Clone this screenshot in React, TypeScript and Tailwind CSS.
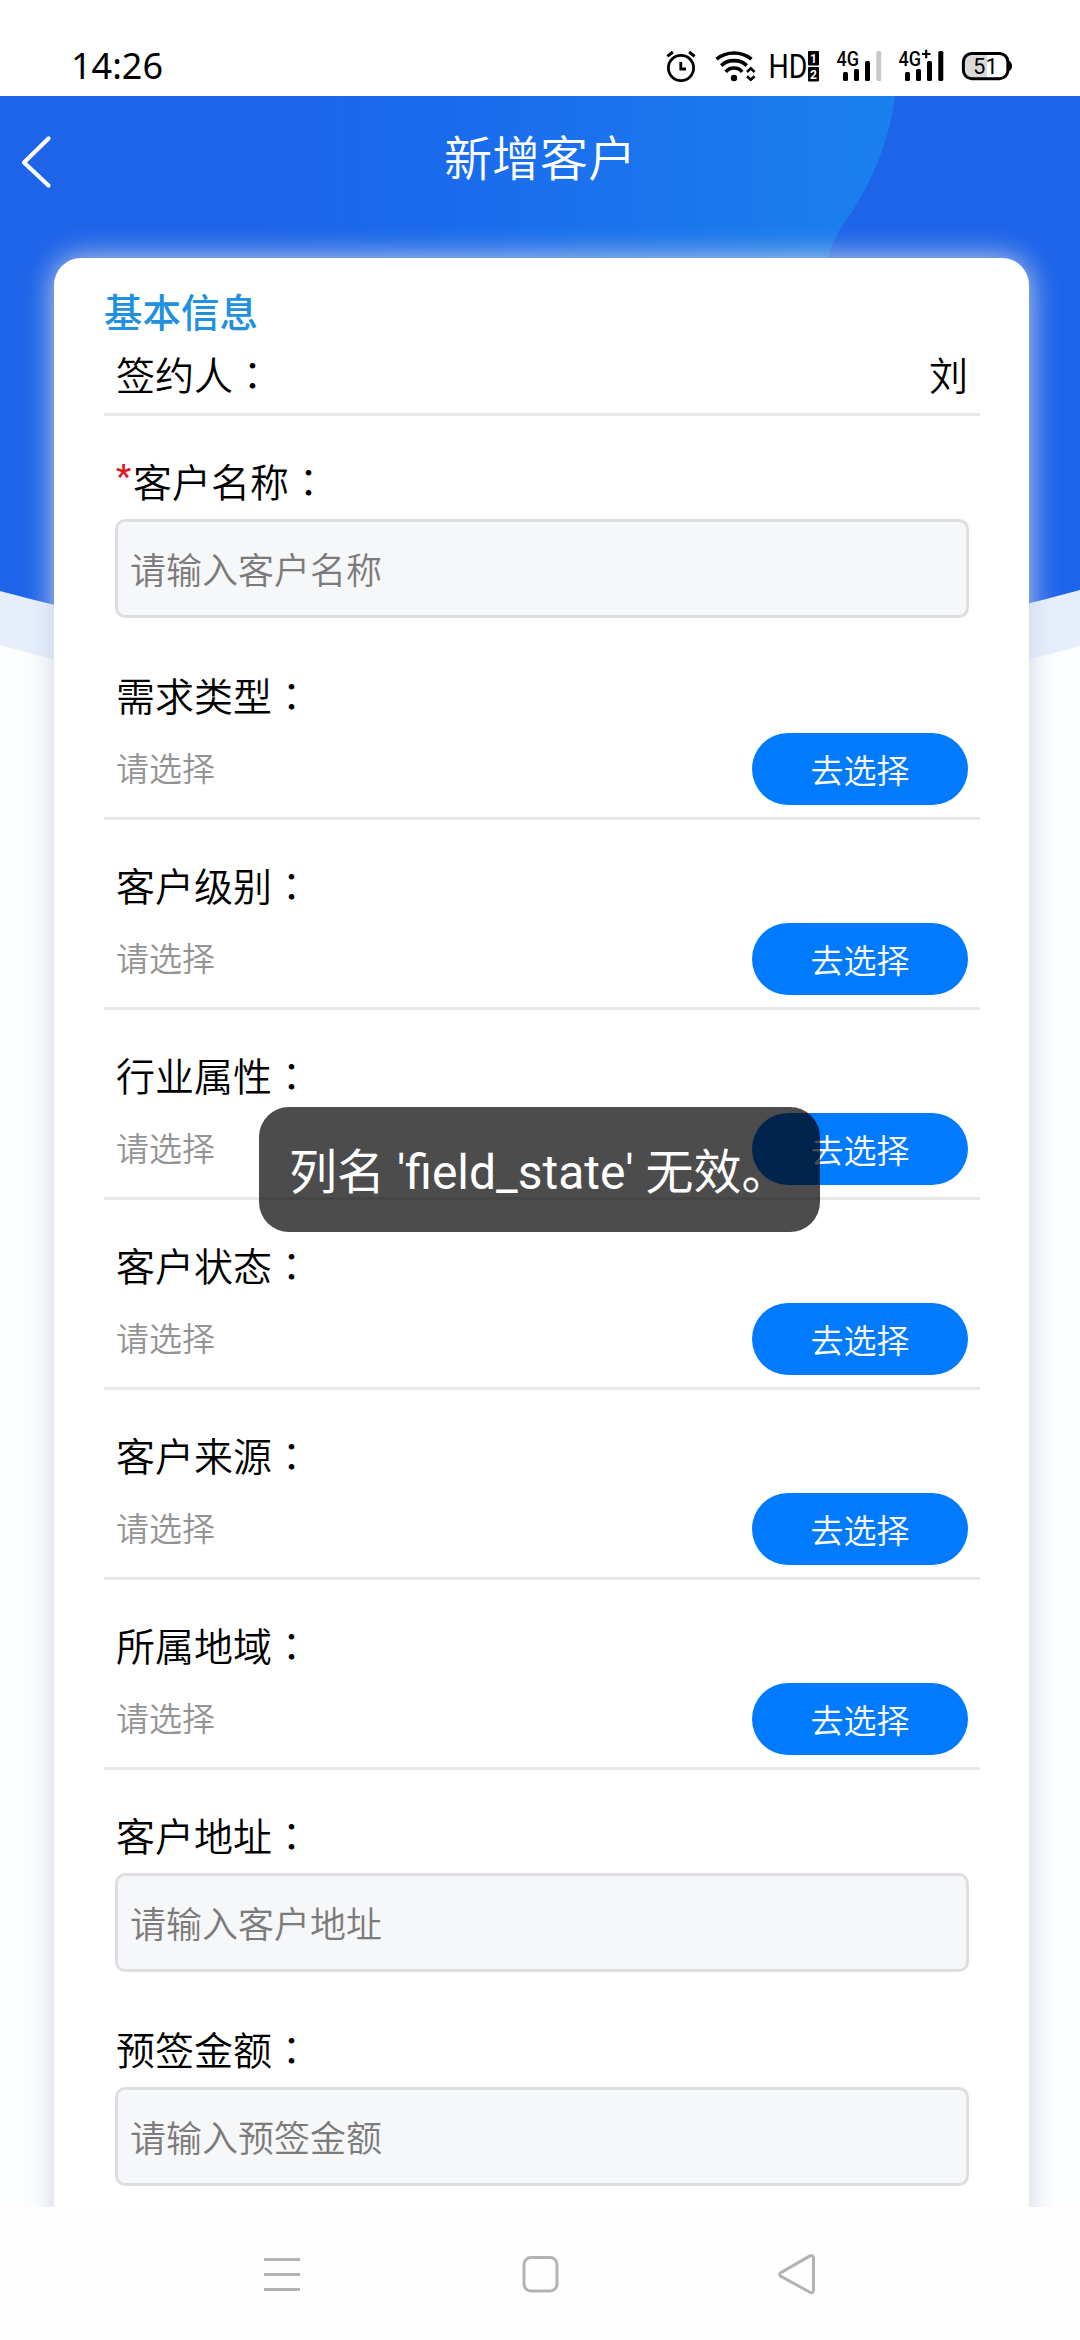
import { ReactNode } from "react";

type Field = {
  label: string;
  type: "input" | "select";
  required?: boolean;
};

const fields: Field[] = [
  { label: "客户名称", type: "input", required: true },
  { label: "需求类型", type: "select" },
  { label: "客户级别", type: "select" },
  { label: "行业属性", type: "select" },
  { label: "客户状态", type: "select" },
  { label: "客户来源", type: "select" },
  { label: "所属地域", type: "select" },
  { label: "客户地址", type: "input" },
  { label: "预签金额", type: "input" },
];

const AlarmIcon = () => (
  <svg width="30" height="36" viewBox="0 0 30 36" fill="none" stroke="#000" strokeWidth="2.8">
    <circle cx="15" cy="20" r="12.6" />
    <path d="M14.8 14v7h5.2" />
    <path d="M1.4 8.4L6.8 4M23.2 4l5.4 4.4" strokeWidth="3" />
  </svg>
);

const WifiIcon = () => (
  <svg width="41" height="36" viewBox="0 0 41 36" fill="none" stroke="#000">
    <path d="M1.5 11.2C11.5 3 26.5 3 36.5 11.2" strokeWidth="3.6" />
    <path d="M6.3 17.6C13 11 25 11 31.7 17.6" strokeWidth="3.6" />
    <path d="M10.8 23.8C15 18.8 23 18.8 27.2 23.8" strokeWidth="3.6" />
    <circle cx="19" cy="30" r="3.2" fill="#000" stroke="none" />
    <path d="M32 24l3.8-3.6 3.8 3.6M32 28.2l3.8 3.6 3.8-3.6" strokeWidth="2.6" />
  </svg>
);

const HdIcon = () => (
  <svg className="overflow-visible" width="52" height="44" viewBox="-2 -4 52 44" fontFamily="Roboto, sans-serif">
    <text x="-1.5" y="30" fontSize="33" textLength="39" lengthAdjust="spacingAndGlyphs">HD</text>
    <rect x="38" y="3" width="11" height="14.5" rx="1" />
    <rect x="38" y="19" width="11" height="14.5" rx="1" />
    <text x="43.5" y="14.6" fontSize="12" fontWeight="700" textAnchor="middle" fill="#fff">1</text>
    <text x="43.5" y="30.6" fontSize="12" fontWeight="700" textAnchor="middle" fill="#fff">2</text>
  </svg>
);

const SignalIcon = ({ plus, weak }: { plus?: boolean; weak?: boolean }) => (
  <svg width="46" height="36" viewBox="0 0 46 36" fontFamily="Roboto, sans-serif">
    <text x="0.5" y="18" fontSize="20" fontWeight="500" textLength="22.5" lengthAdjust="spacingAndGlyphs">4G</text>
    {plus && <path d="M24 6h8.5M28.2 1.8v8.5" stroke="#000" strokeWidth="2.2" />}
    <rect x="7" y="24" width="5" height="9" rx="1.5" />
    <rect x="18" y="21" width="5" height="12" rx="1.5" />
    <rect x="29" y="13" width="5" height="20" rx="1.5" />
    <rect x="40.3" y="3" width="5" height="30" rx="1.5" fill={weak ? "#c9c9c9" : "#000"} />
  </svg>
);

const BatteryIcon = () => (
  <svg width="52" height="36" viewBox="0 0 52 36">
    <path d="M10 5h16v26H10a8 8 0 0 1-8-8V13a8 8 0 0 1 8-8z" fill="#d9d9d9" />
    <rect x="2.4" y="5.4" width="44.5" height="25.4" rx="8.5" fill="none" stroke="#000" strokeWidth="3" />
    <path d="M47.5 12.5c4.8 2 4.8 9 0 11z" />
    <text x="24.4" y="25.8" fontSize="22" textAnchor="middle" fontFamily="Roboto, sans-serif">51</text>
  </svg>
);

const StatusBar = () => (
  <div className="flex h-24 items-start justify-between bg-white pt-11 pr-[67px] pl-[71px]">
    <span className="mt-1 font-['Noto_Sans',sans-serif] text-[36px] leading-9 text-black">14:26</span>
    <div className="flex items-center">
      <AlarmIcon />
      <div className="ml-[19px]"><WifiIcon /></div>
      <div className="ml-3"><HdIcon /></div>
      <div className="ml-4"><SignalIcon weak /></div>
      <div className="ml-4"><SignalIcon plus /></div>
      <div className="ml-[17px]"><BatteryIcon /></div>
    </div>
  </div>
);

const Backdrop = () => (
  <svg className="absolute top-0 left-0" width="1080" height="580" viewBox="0 0 1080 580">
    <defs>
      <linearGradient id="glow" x1="0" y1="0" x2="1" y2="0">
        <stop offset="0" stopColor="#1d64e9" />
        <stop offset="0.3" stopColor="#1a6bec" />
        <stop offset="1" stopColor="#1a80ee" />
      </linearGradient>
    </defs>
    <path d="M0 0H1080V550Q810 625 540 625Q270 625 0 549z" fill="#e6eefc" />
    <path d="M0 0H1080V494Q810 568 540 568Q270 568 0 495z" fill="#1d64e9" />
    <path d="M260 0H895C889 50 866 98 842 130Q832 146 828 162H260z" fill="url(#glow)" />
  </svg>
);

const Label = ({ children, required }: { children: ReactNode; required?: boolean }) => (
  <div className="flex h-[57px] items-center px-3 pb-1 text-[39px] font-[350] text-black">
    {required && <span className="w-[17px] pb-2.5 font-[Roboto] text-[34px] font-medium text-[#dd1a21]">*</span>}
    <span>{children}</span>
    <span className="font-['Noto_Sans_CJK_TC',sans-serif]">：</span>
  </div>
);

const InputField = ({ label, required }: Field) => (
  <div className="pt-[38px]">
    <Label required={required}>{label}</Label>
    <div className="mx-[11px] mt-2 flex h-[99px] items-center rounded-[10px] border-[3px] border-[#dddee1] bg-[#f6f7f9] px-3 pb-0.5 text-[36px] font-[350] text-[#7b7b7b]">
      请输入{label}
    </div>
    <div className="h-3" />
  </div>
);

const SelectField = ({ label }: Field) => (
  <div className="h-[190px] border-b-[3px] border-[#e8e8e8] pt-[38px]">
    <Label>{label}</Label>
    <div className="mt-2 flex items-center justify-between px-3">
      <span className="pb-1 text-[33px] font-[350] text-[#949494]">请选择</span>
      <button className="h-[72px] w-[216px] rounded-full bg-[#007aff] text-[33px] font-[350] text-white">去选择</button>
    </div>
  </div>
);

const NavBar = () => (
  <div className="flex h-[133px] items-center justify-between bg-[#fefefe] px-[262px] pt-0.5">
    <svg width="40" height="42" viewBox="0 0 40 42" stroke="#b3b3b3" strokeWidth="3">
      <path d="M2 5.500h36M2 20.500h36M2 35.500h36" />
    </svg>
    <svg width="40" height="42" viewBox="0 0 40 42" fill="none" stroke="#b3b3b3" strokeWidth="3">
      <rect x="4" y="3.5" width="33" height="33.5" rx="7" />
    </svg>
    <svg width="40" height="42" viewBox="0 0 40 42" fill="none" stroke="#b3b3b3" strokeWidth="3" strokeLinejoin="round">
      <path d="M1.5 19.4L31 2.4Q34.5 1.4 34.5 5V36.5Q34.5 40 31 38.8L1.5 22.6Q-0.5 21 1.5 19.4z" transform="translate(1 -0.5)" />
    </svg>
  </div>
);

const Toast = ({ message }: { message: string }) => (
  <div className="absolute top-[1107px] left-[259px] flex h-[125px] w-[561px] items-center rounded-[30px] bg-black/70 pt-1.5 pl-[30px] font-[Roboto,'Noto_Sans_CJK_SC',sans-serif] text-[48px] whitespace-nowrap text-white">
    {message}
  </div>
);

const App = () => {
  return (
    <div className="relative flex h-[2340px] w-[1080px] flex-col overflow-hidden bg-[#fdfeff] font-['Noto_Sans_CJK_SC',sans-serif] leading-none">
      <StatusBar />
      <div className="relative flex-1 overflow-hidden">
        <Backdrop />
        <div className="relative flex h-[162px] items-start">
          <svg className="mt-[38px] ml-[18px]" width="36" height="56" viewBox="0 0 36 56" fill="none" stroke="#fff" strokeWidth="4.2" strokeLinecap="round" strokeLinejoin="round">
            <path d="M30.5 4.5L6 28.5L30.5 51.5" />
          </svg>
          <h1 className="mr-[54px] flex-1 pt-[35px] text-center text-[48px] font-[350] text-white">新增客户</h1>
        </div>
        <div className="relative mr-[51px] ml-[54px] h-[2100px] rounded-[27px] bg-white pt-[33px] pr-[49px] pl-[50px] shadow-[0_0_30px_#cfd3e3]">
          <h2 className="text-[38.5px] font-medium text-[#2190e0]">基本信息</h2>
          <div className="mt-[17.5px] flex h-[69px] items-start justify-between border-b-[3px] border-[#e8e8e8]">
            <Label>签约人</Label>
            <span className="pt-[7px] pr-3 text-[39px] font-[350]">刘</span>
          </div>
          {fields.map((field) =>
            field.type === "input" ? (
              <InputField key={field.label} {...field} />
            ) : (
              <SelectField key={field.label} {...field} />
            )
          )}
        </div>
      </div>
      <NavBar />
      <Toast message="列名 'field_state' 无效。" />
    </div>
  );
};

export default App;
